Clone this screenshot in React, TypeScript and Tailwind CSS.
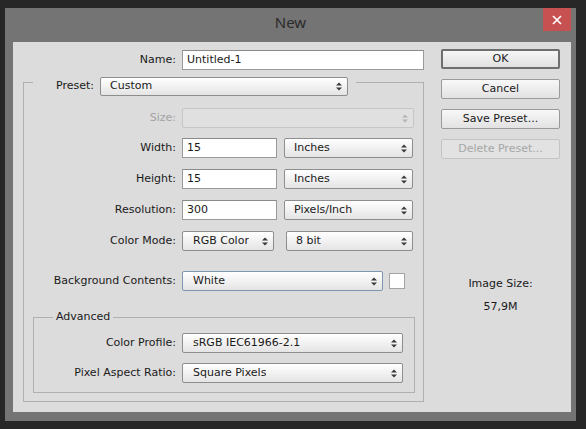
import type { ReactNode } from "react";

function Arrows({ disabled }: { disabled?: boolean }) {
  return (
    <svg width="6" height="9" viewBox="0 0 6 9" className={disabled ? "text-[#b4b4b4]" : "text-[#3a3a3a]"}>
      <path d="M0 3.5 L3 0.5 L6 3.5 Z" fill="currentColor" />
      <path d="M0 5.5 L3 8.5 L6 5.5 Z" fill="currentColor" />
    </svg>
  );
}

function Select({
  w,
  children,
  disabled,
  focused,
}: {
  w: string;
  children?: ReactNode;
  disabled?: boolean;
  focused?: boolean;
}) {
  const border = disabled
    ? "border-[#c6c6c6] bg-[#e0e0e0]"
    : focused
      ? "border-[#7d97b3] bg-gradient-to-b from-white to-[#e4e4e4]"
      : "border-[#8e8e8e] bg-gradient-to-b from-white to-[#e4e4e4]";
  return (
    <div className={`flex h-[20px] shrink-0 items-center justify-between rounded-[2px] border pl-[9px] pr-[5px] ${border} ${w}`}>
      <span className="truncate">{children}</span>
      <Arrows disabled={disabled} />
    </div>
  );
}

function Input({ w, value }: { w: string; value: string }) {
  return (
    <div className={`flex h-[20px] shrink-0 items-center border border-[#9a9a9a] border-t-[#8a8a8a] bg-white pl-[4px] ${w}`}>
      {value}
    </div>
  );
}

function Row({ label, lw, mt, children, muted }: { label: string; lw: string; mt: string; children: ReactNode; muted?: boolean }) {
  return (
    <div className={`flex h-[20px] items-center ${mt}`}>
      <div className={`${lw} shrink-0 pr-[6px] text-right ${muted ? "text-[#a2a2a2]" : ""}`}>{label}</div>
      {children}
    </div>
  );
}

function Button({ children, primary, disabled, mt }: { children: ReactNode; primary?: boolean; disabled?: boolean; mt?: string }) {
  const cls = primary
    ? "border-2 border-[#6e6e6e] bg-gradient-to-b from-[#f6f6f6] to-[#e0e0e0]"
    : disabled
      ? "border border-[#c4c4c4] bg-[#e2e2e2] text-[#a6a6a6]"
      : "border border-[#9a9a9a] bg-gradient-to-b from-[#f8f8f8] to-[#e2e2e2]";
  return (
    <div className={`flex h-[20px] w-[119px] items-center justify-center rounded-[2px] ${cls} ${mt ?? ""}`}>
      {children}
    </div>
  );
}

const line = "border-[#b0b0b0]";

export default function App() {
  return (
    <div className="h-[429px] w-[586px] overflow-hidden bg-[#272727] pl-[5px] pt-[8px] font-['DejaVu_Sans',sans-serif] text-[11px] text-[#1a1a1a]">
      <div className="h-[413px] w-[571px] bg-[#747474]">
        {/* title bar */}
        <div className="grid h-[34px] grid-cols-[1fr_auto_1fr]">
          <div />
          <div className="pt-[3px] font-['Noto_Sans',sans-serif] text-[15px] text-[#2a2a2a]">New</div>
          <div className="flex justify-end pr-[5px]">
            <div className="flex h-[23px] w-[28px] items-center justify-center bg-[#c75050]">
              <svg width="10" height="10" viewBox="0 0 10 10">
                <path d="M1 1 L9 9 M9 1 L1 9" stroke="white" strokeWidth="1.7" />
              </svg>
            </div>
          </div>
        </div>

        {/* body */}
        <div className="ml-[8px] flex h-[370px] w-[558px] items-start bg-[#dcdcdc] pl-[10px]">
          <div className="w-[401px] pt-[8px]">
            <Row label="Name:" lw="w-[159px]" mt="">
              <Input w="flex-1" value="Untitled-1" />
            </Row>

            {/* preset group */}
            <div className="mt-[7px] flex h-[19px]">
              <div className={`mt-[5px] w-[10px] border-l border-t ${line}`} />
              <div className="flex h-[19px] items-center pl-[23px]">
                <span className="pr-[6px]">Preset:</span>
                <Select w="w-[248px] !h-[19px]">Custom</Select>
              </div>
              <div className={`ml-[8px] mt-[5px] flex-1 border-r border-t ${line}`} />
            </div>
            <div className={`flex flex-col border-x border-b pb-[8px] ${line}`}>
              <Row label="Size:" lw="w-[158px]" mt="mt-[12px]" muted>
                <Select w="w-[232px]" disabled />
              </Row>
              <Row label="Width:" lw="w-[158px]" mt="mt-[10px]">
                <Input w="w-[95px]" value="15" />
                <div className="ml-[7px]">
                  <Select w="w-[129px]">Inches</Select>
                </div>
              </Row>
              <Row label="Height:" lw="w-[158px]" mt="mt-[11px]">
                <Input w="w-[95px]" value="15" />
                <div className="ml-[7px]">
                  <Select w="w-[129px]">Inches</Select>
                </div>
              </Row>
              <Row label="Resolution:" lw="w-[158px]" mt="mt-[11px]">
                <Input w="w-[95px]" value="300" />
                <div className="ml-[7px]">
                  <Select w="w-[129px]">Pixels/Inch</Select>
                </div>
              </Row>
              <Row label="Color Mode:" lw="w-[158px]" mt="mt-[11px]">
                <Select w="w-[92px] !pl-[10px]">RGB Color</Select>
                <div className="ml-[12px]">
                  <Select w="w-[127px]">8 bit</Select>
                </div>
              </Row>
              <Row label="Background Contents:" lw="w-[158px]" mt="mt-[20px]">
                <Select w="w-[201px] !pl-[10px]" focused>
                  White
                </Select>
                <div className="ml-[6px] h-[16px] w-[16px] border border-[#a4a4a4] bg-white" />
              </Row>

              {/* advanced group */}
              <div className="ml-[9px] mt-[19px] w-[382px]">
                <div className="flex h-[14px]">
                  <div className={`mt-[7px] w-[20px] border-l border-t ${line}`} />
                  <span className="px-[3px] leading-[14px]">Advanced</span>
                  <div className={`mt-[7px] flex-1 border-r border-t ${line}`} />
                </div>
                <div className={`flex flex-col border-x border-b pb-[9px] ${line}`}>
                  <Row label="Color Profile:" lw="w-[148px]" mt="mt-[9px]">
                    <Select w="w-[221px] !pl-[10px]">sRGB IEC61966-2.1</Select>
                  </Row>
                  <Row label="Pixel Aspect Ratio:" lw="w-[148px]" mt="mt-[10px]">
                    <Select w="w-[221px] !pl-[10px]">Square Pixels</Select>
                  </Row>
                </div>
              </div>
            </div>
          </div>

          {/* buttons column */}
          <div className="ml-[17px] flex w-[119px] flex-col pt-[7px]">
            <Button primary>OK</Button>
            <Button mt="mt-[10px]">Cancel</Button>
            <Button mt="mt-[10px]">Save Preset...</Button>
            <Button mt="mt-[10px]" disabled>
              Delete Preset...
            </Button>
            <div className="mt-[118px] text-center leading-[14px]">Image Size:</div>
            <div className="mt-[9px] text-center leading-[14px]">57,9M</div>
          </div>
        </div>
      </div>
    </div>
  );
}
